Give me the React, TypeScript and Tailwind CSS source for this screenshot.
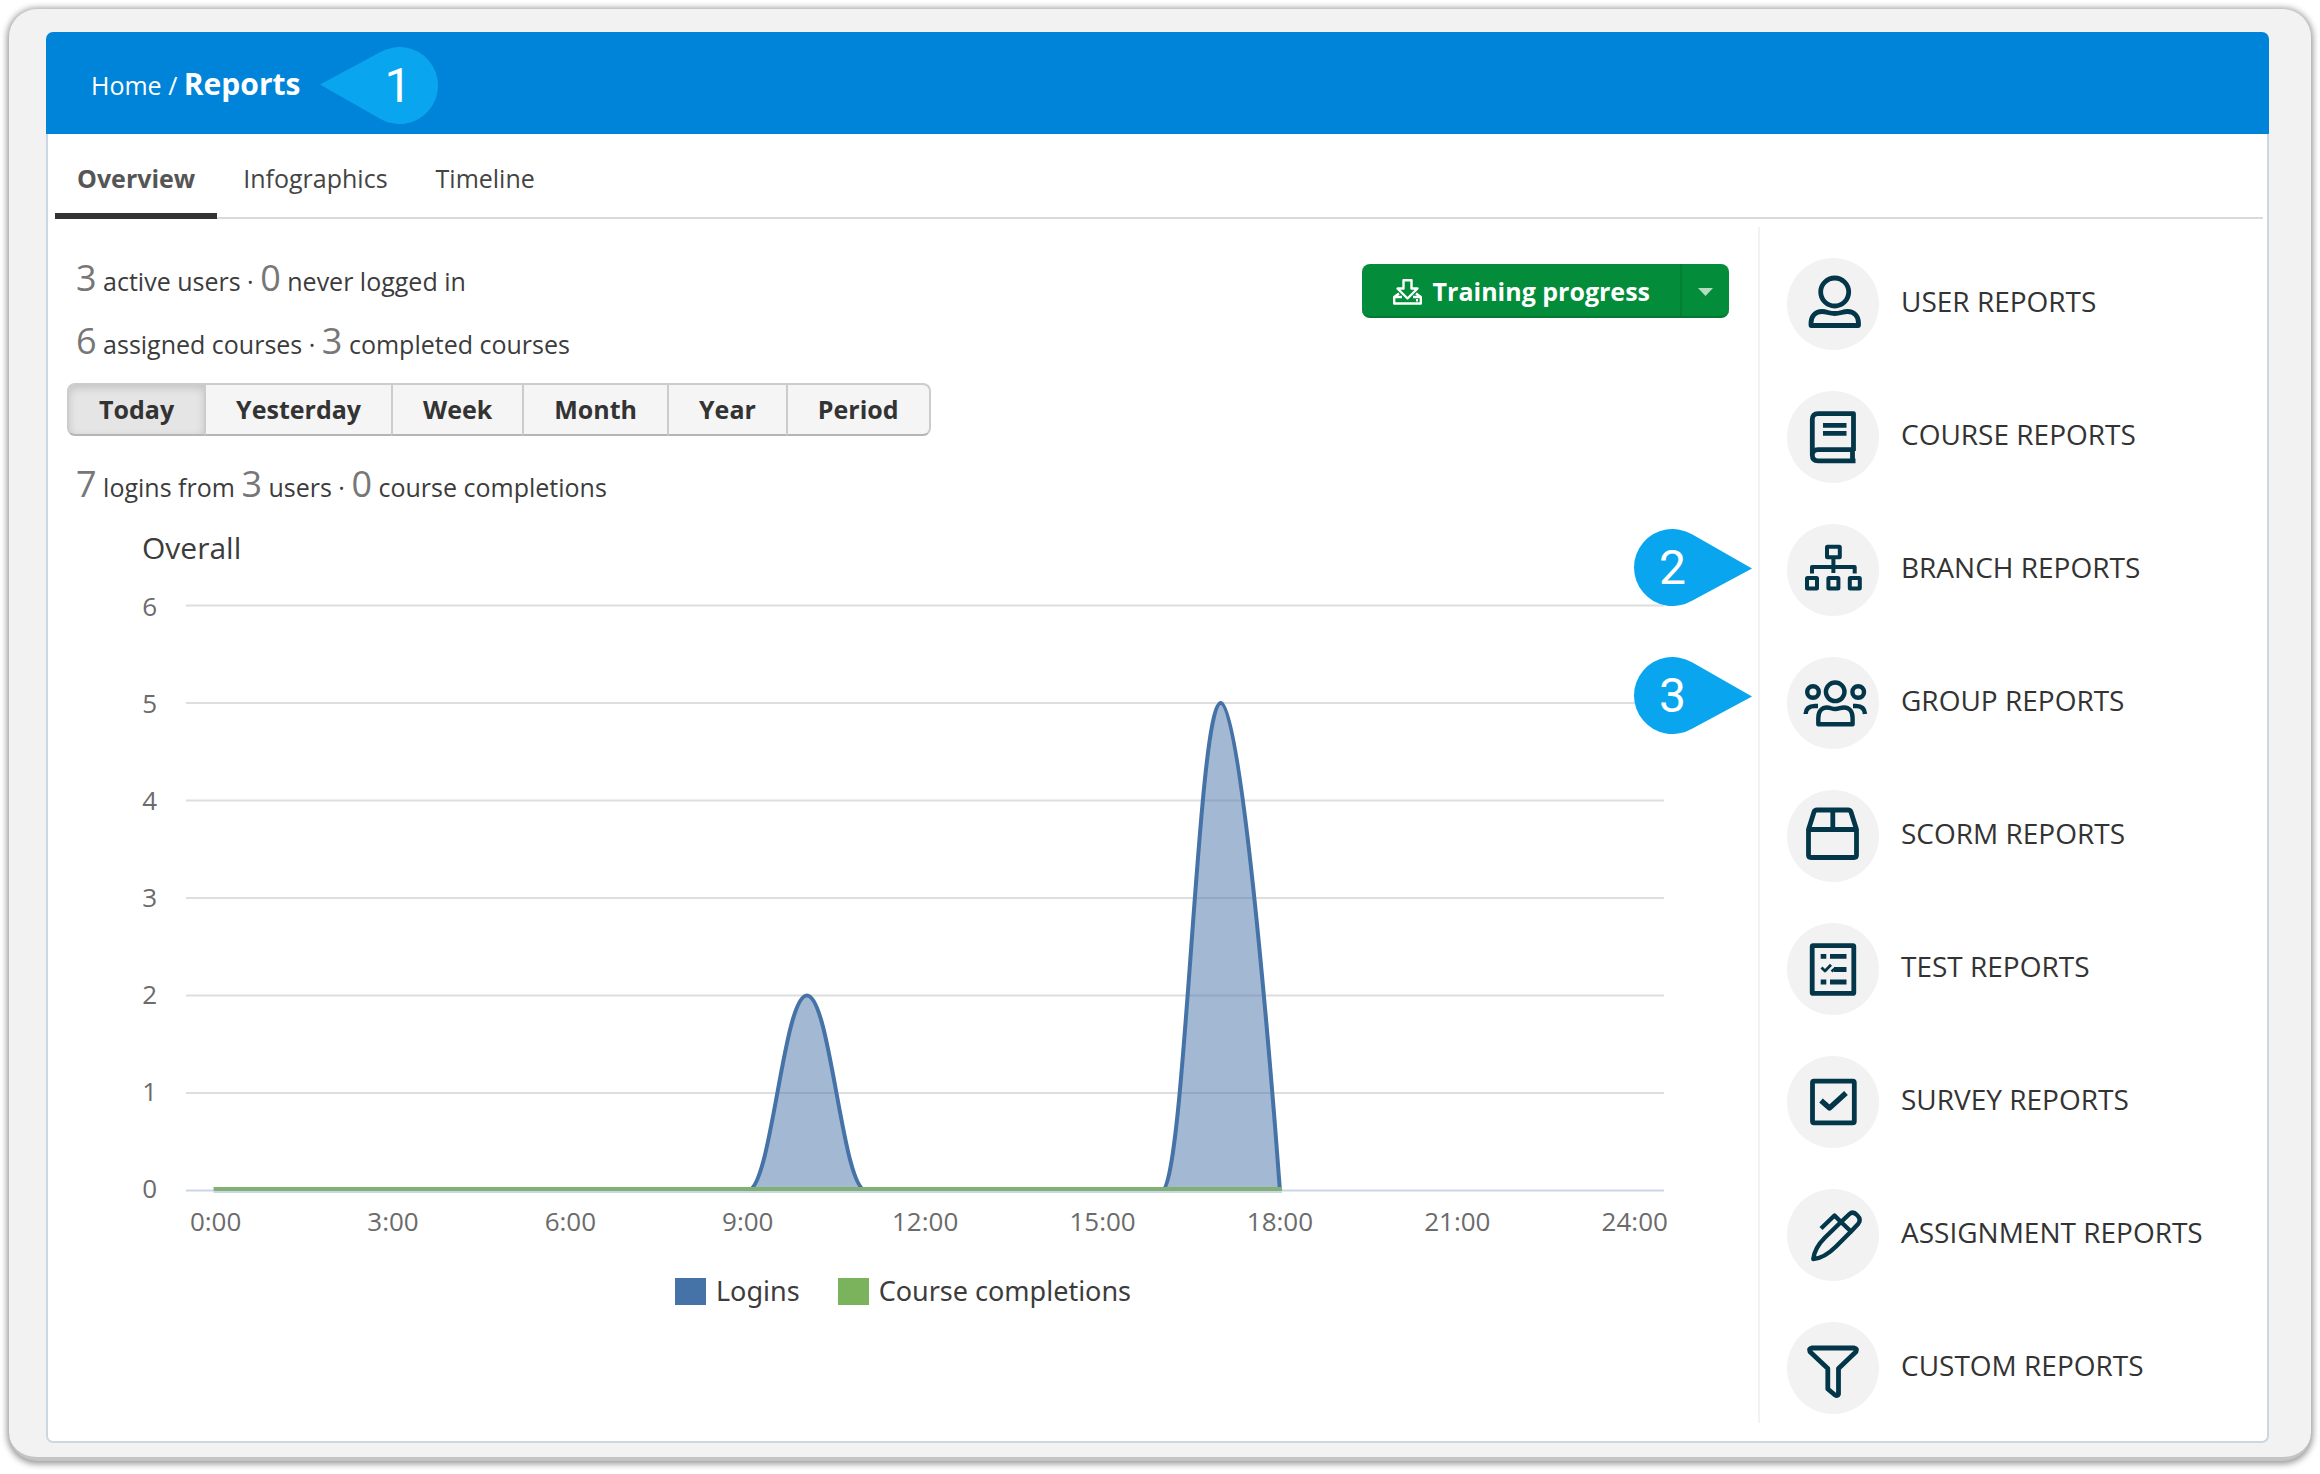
import { ReactNode, useState } from 'react'
import clsx from 'clsx'

const tabs = ['Overview', 'Infographics', 'Timeline']
const periods = ['Today', 'Yesterday', 'Week', 'Month', 'Year', 'Period']

interface IReport {
  label: string
  icon: ReactNode
  marker?: number
  markerClass?: string
}

const reports: IReport[] = [
  {
    label: 'USER REPORTS',
    icon: (
      <>
        <circle cx="47.7" cy="34" r="14" />
        <path d="M24 67.5V65C24 58 28.5 53.5 35 53.5C40 53.5 42 55.5 47.7 55.5C53.5 55.5 55.5 53.5 60.5 53.5C67 53.5 71.5 58 71.5 65V67.5Z" />
      </>
    ),
  },
  {
    label: 'COURSE REPORTS',
    icon: (
      <>
        <path d="M66.5 60V22.7H31Q25.3 22.7 25.3 28.5V64Q25.3 69.8 31 69.8H68.5M25.3 64Q25.3 58.7 31 58.7H66.5M65.5 59V69" />
        <path d="M36 34.3H59.5M36 42.3H59.5" />
      </>
    ),
  },
  {
    label: 'BRANCH REPORTS',
    marker: 2,
    markerClass: 'top-[5px]',
    icon: (
      <g strokeWidth="4">
        <rect x="40" y="22.7" width="12.8" height="10.5" rx="0.5" />
        <path d="M46.4 33.5V49M25 49.5V43H67.7V49.5" />
        <rect x="20" y="54" width="10" height="10.4" rx="0.5" />
        <rect x="41.4" y="54" width="10" height="10.4" rx="0.5" />
        <rect x="62.8" y="54" width="10" height="10.4" rx="0.5" />
      </g>
    ),
  },
  {
    label: 'GROUP REPORTS',
    marker: 3,
    markerClass: 'top-0',
    icon: (
      <g strokeWidth="4.4">
        <circle cx="48.2" cy="34.8" r="9.3" />
        <circle cx="26" cy="35" r="5.8" />
        <circle cx="71.2" cy="35" r="5.8" />
        <path d="M31.3 67.2V61C31.3 54 35 50.5 40 50.5C43.5 50.5 44.5 52 48.3 52C52 52 53.5 50.5 57 50.5C62 50.5 65.6 54 65.6 61V67.2Z" />
        <path d="M31 49H28Q19 49 18.6 57M66 49H69Q77.5 49 78 57" />
      </g>
    ),
  },
  {
    label: 'SCORM REPORTS',
    icon: (
      <path d="M21.5 39.5L27 22Q27.7 20 30 20H61Q63.3 20 64 22L69.5 39.5V65Q69.5 67.5 67 67.5H24Q21.5 67.5 21.5 65ZM21.5 39.5H69.5M45.8 20V39.5" />
    ),
  },
  {
    label: 'TEST REPORTS',
    icon: (
      <>
        <rect x="25.2" y="22.6" width="41.6" height="47.8" rx="1" />
        <path d="M43 33.3H59.5M47 46.5H59.5M43 59H59.5M33.7 33.3H39.3M33.7 59H39.3" />
        <path strokeWidth="2.8" d="M34.5 44.5L38 48L44 41.8M44.5 48.5L48 45.5" />
      </>
    ),
  },
  {
    label: 'SURVEY REPORTS',
    icon: (
      <>
        <rect x="25.5" y="25.2" width="41.8" height="41.6" rx="1.5" />
        <path strokeWidth="5.4" d="M34 44.5L42.5 52L59 37" />
      </>
    ),
  },
  {
    label: 'ASSIGNMENT REPORTS',
    icon: (
      <g strokeWidth="4.4">
        <path d="M54 33L38 48.5C31 55.5 27 63.5 26.3 70C34 69.5 42 64.5 49 57.5L64 42.5" />
        <path d="M54 33L62.5 25Q66 21.8 70 26Q74.7 30.7 71.3 34.7L64 42.5Z" />
        <path d="M34 39.5L47.5 26.5L54 33" />
      </g>
    ),
  },
  {
    label: 'CUSTOM REPORTS',
    icon: (
      <path d="M24.5 26H67.5Q70.5 26.5 69 29.7L51.5 46.5V72Q50.5 74.5 48 73L40.8 67V46.5L23 29.7Q21.5 26.5 24.5 26Z" />
    ),
  },
]

const X = (h: number) => 167.6 + h * 59.13
const Y = (v: number) => 622.5 - v * 97.5

// spline with flat tangents, the last hour drops straight to its end point
const logins = [
  `M${X(0)} ${Y(0)}`,
  `L${X(9)} ${Y(0)}`,
  `C${X(9.4)} ${Y(0)} ${X(9.6)} ${Y(2)} ${X(10)} ${Y(2)}`,
  `C${X(10.4)} ${Y(2)} ${X(10.6)} ${Y(0)} ${X(11)} ${Y(0)}`,
  `L${X(16)} ${Y(0)}`,
  `C${X(16.4)} ${Y(0)} ${X(16.6)} ${Y(5)} ${X(17)} ${Y(5)}`,
  `C${X(17.4)} ${Y(5)} ${X(18)} ${Y(0)} ${X(18)} ${Y(0)}`,
].join(' ')

function Marker({ n, left, className }: { n: number; left?: boolean; className?: string }) {
  return (
    <svg width="118" height="77" viewBox="0 0 118 77" className={clsx('shrink-0', className)} aria-hidden="true">
      <path
        d={left
          ? 'M0 37.5L60 5.3A38.5 38.5 0 1 1 60 71.7Z'
          : 'M118 39.5L58 5.3A38.5 38.5 0 1 0 58 71.7Z'}
        fill="#09a6ef"
      />
      <text x={left ? 78 : 38.5} y="55" textAnchor="middle" fill="#fff" className="font-['Roboto',sans-serif] text-[48px]">{n}</text>
    </svg>
  )
}

function Num({ children }: { children: ReactNode }) {
  return <span className="text-[36px] leading-none text-[#777]">{children}</span>
}

function Chart() {
  return (
    <svg viewBox="0 0 1710 680" className="block w-full" role="img" aria-label="Overall">
      {[0, 1, 2, 3, 4, 5, 6].map((v) => (
        <g key={v}>
          <line x1="138" x2="1616" y1={Y(v)} y2={Y(v)} stroke={v === 0 ? '#c9d6e4' : '#dedede'} strokeWidth="2" />
          <text x="109" y={630 - v * 97} textAnchor="end" fill="#6b6b6b" className="text-[26px]">{v}</text>
        </g>
      ))}
      <path d={logins + 'Z'} fill="#4572a7" fillOpacity="0.5" />
      <path d={logins} fill="none" stroke="#4572a7" strokeWidth="4" strokeLinejoin="round" />
      <rect x={X(0) - 2} y="619" width={X(18) - X(0) + 4} height="4" fill="#80b074" />
      <rect x={X(0) - 2} y="623" width={X(18) - X(0) + 4} height="2" fill="#c9d6e4" />
      {[0, 3, 6, 9, 12, 15, 18, 21, 24].map((h) => (
        <text key={h} x={X(h)} y="663" textAnchor="middle" fill="#6b6b6b" className="text-[26px]">{h}:00</text>
      ))}
    </svg>
  )
}

export default function App() {
  const [tab, setTab] = useState('Overview')
  const [period, setPeriod] = useState('Today')

  return (
    <div className="bg-white px-[9px] pt-[9px] pb-3 font-['Open_Sans',sans-serif] text-[25px] text-[#3c3c3c]">
      <div className="rounded-[28px] border-b-4 border-[#c4c4c4] bg-[#f2f2f2] pt-[23px] pr-[42px] pb-[14px] pl-[37px] shadow-[0_1px_6px_2px_rgba(0,0,0,0.4)]">
        <header className="flex h-[102px] items-center rounded-t-[7px] bg-[#0084d9] pl-[45px] text-white">
          <nav className="mt-[3px] leading-[102px]">
            <a href="#home">Home</a> / <strong className="text-[30px] leading-none font-bold">Reports</strong>
          </nav>
          <Marker n={1} left className="mt-1 ml-5" />
        </header>

        <div className="rounded-b-[7px] border-x-2 border-b-2 border-[#c9d8e2] bg-white pb-[18px]">
          <div className="mr-1 ml-[7px] flex gap-1 border-b-2 border-[#dadada]" role="tablist">
            {tabs.map((t) => (
              <button
                key={t}
                role="tab"
                aria-selected={t === tab}
                onClick={() => setTab(t)}
                className={clsx(
                  '-mb-0.5 border-b-[6px] px-[22px] pt-[9px] leading-[70px]',
                  t === tab ? 'border-[#333] font-bold text-[#555]' : 'border-transparent text-[#444]'
                )}
              >
                {t}
              </button>
            ))}
          </div>

          <div className="flex pt-2">
            <main className="min-w-0 flex-1 pt-[23px]">
              <div className="flex items-start justify-between pr-[29px] pl-[28px]">
                <div className="leading-[63px]">
                  <p><Num>3</Num> active users · <Num>0</Num> never logged in</p>
                  <p><Num>6</Num> assigned courses · <Num>3</Num> completed courses</p>
                </div>
                <div className="mt-[14px] flex h-[54px] rounded-lg border-b-2 border-[#027a2e] bg-[#038c39] text-white">
                  <button className="flex items-center gap-[11px] border-r-2 border-[#037f33] pt-[3px] pr-[30px] pl-[31px] font-bold">
                    <svg width="29" height="26" viewBox="0 0 29 26" fill="none" stroke="currentColor" strokeWidth="2.4" strokeLinejoin="round" aria-hidden="true">
                      <path d="M10.5 1.2H18.5V9.5H24.5L14.5 19.5L4.5 9.5H10.5Z" />
                      <path d="M6 14.5L1.2 18V24.5H27.8V18L23 14.5M1.2 18H9M20 18H27.8" />
                      <path d="M23 21.3H25" />
                    </svg>
                    Training progress
                  </button>
                  <button className="flex items-center px-4 pt-[3px]" aria-label="More">
                    <svg width="15" height="8" viewBox="0 0 15 8" fill="#b3dcc1" aria-hidden="true"><path d="M0 0H15L7.5 8Z" /></svg>
                  </button>
                </div>
              </div>

              <div className="mt-[7px] ml-[19px] flex">
                {periods.map((p) => (
                  <button
                    key={p}
                    onClick={() => setPeriod(p)}
                    className={clsx(
                      '-mr-0.5 h-[53px] border-2 border-[#ccc] border-b-[#b5b5b5] px-[30px] font-bold text-[#333] first:rounded-l-lg last:rounded-r-lg',
                      p === period ? 'bg-[#e5e5e5] shadow-[inset_0_3px_8px_rgba(0,0,0,0.15)]' : 'bg-[#f5f5f5]'
                    )}
                  >
                    {p}
                  </button>
                ))}
              </div>

              <p className="mt-5 pl-[28px] leading-[63px]">
                <Num>7</Num> logins from <Num>3</Num> users · <Num>0</Num> course completions
              </p>

              <h2 className="mt-[9px] pl-[94px] text-[30px] leading-10">Overall</h2>
              <Chart />
              <div className="mt-[27px] flex justify-center gap-[38px] font-['Noto_Sans',sans-serif] text-[27px] leading-[32px]">
                <span className="flex items-center gap-[10px]"><i className="h-[27px] w-[31px] bg-[#4572a7]" />Logins</span>
                <span className="flex items-center gap-[10px]"><i className="h-[27px] w-[31px] bg-[#7ab35c]" />Course completions</span>
              </div>
            </main>

            <aside className="w-[509px] shrink-0 border-l-2 border-[#f2f2f2] pt-[31px] pb-[9px] pl-[27px]">
              <ul className="flex flex-col gap-[41px]">
                {reports.map((r) => (
                  <li key={r.label} className="relative">
                    {r.marker && <Marker n={r.marker} className={clsx('absolute right-full mr-[35px]', r.markerClass)} />}
                    <a href="#report" className="flex items-center gap-[22px]">
                      <svg width="92" height="92" viewBox="0 0 92 92" fill="none" stroke="#033649" strokeWidth="4.8" strokeLinejoin="round" className="rounded-full bg-[#f2f2f2]" aria-hidden="true">
                        {r.icon}
                      </svg>
                      <span className="pb-1.5 text-[28px] text-[#333]">{r.label}</span>
                    </a>
                  </li>
                ))}
              </ul>
            </aside>
          </div>
        </div>
      </div>
    </div>
  )
}
